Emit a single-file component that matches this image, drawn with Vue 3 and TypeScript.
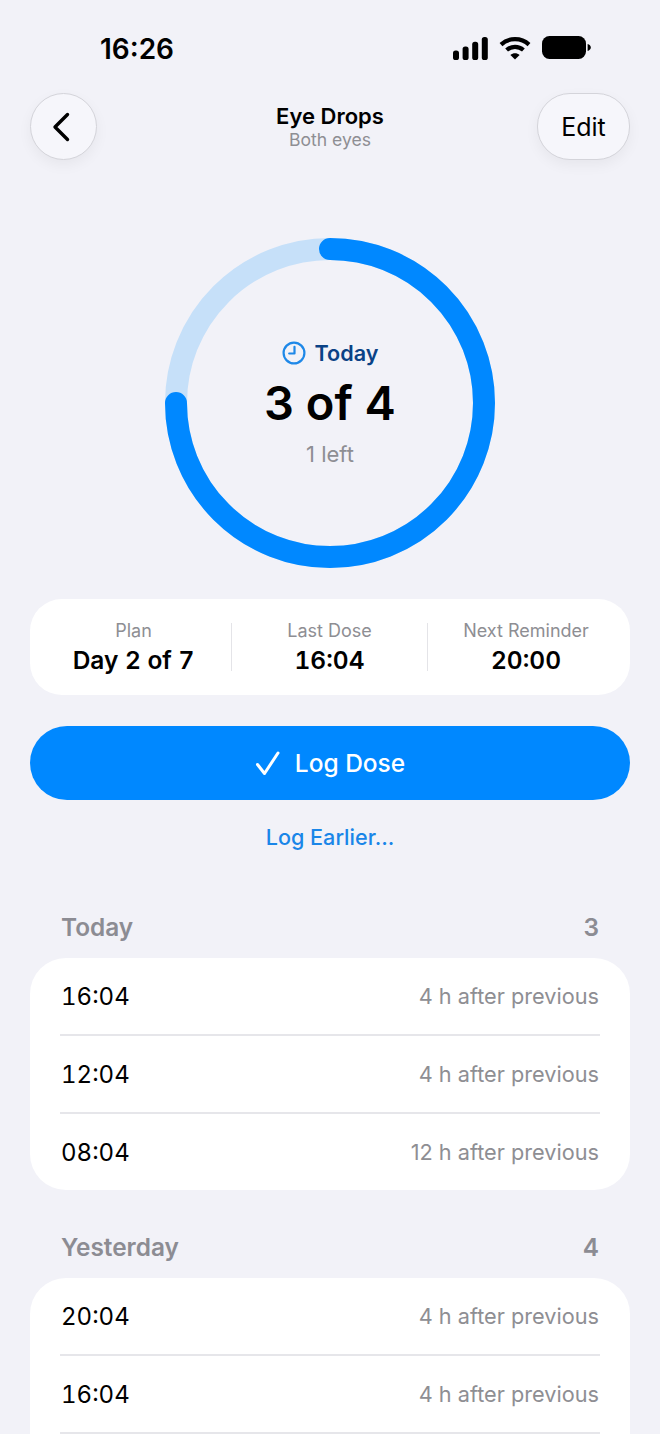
<template>
  <div class="screen">
    <div class="status-bar">
      <span class="clock">16:26</span>
      <div class="status-icons">
        <svg width="35" height="23" viewBox="0 0 35 23" fill="#000">
          <rect x="0" y="13.500" width="6" height="9.500" rx="2.600" />
          <rect x="9.600" y="9.500" width="6" height="13.500" rx="2.600" />
          <rect x="19.200" y="4.800" width="6" height="18.200" rx="2.600" />
          <rect x="28.800" y="0" width="6" height="23" rx="2.600" />
        </svg>
        <svg width="32" height="24" viewBox="0 0 32 24" fill="none" stroke="#000" stroke-width="4.200">
          <path d="M2 8.600C9.800 1.400 22.200 1.400 30 8.600" />
          <path d="M7.600 14C12.400 9.800 19.600 9.800 24.400 14" />
          <path d="M16 23.600L11.400 18.900C14 16.800 18 16.800 20.600 18.900Z" fill="#000" stroke="none" />
        </svg>
        <svg width="49" height="24" viewBox="0 0 49 24" fill="#000">
          <rect x="0" y="0" width="44" height="23" rx="7.500" />
          <path d="M45.600 8v7c1.900-.6 3.200-1.900 3.200-3.500S47.500 8.600 45.600 8Z" />
        </svg>
      </div>
    </div>

    <header class="nav">
      <button class="glass back" aria-label="Back">
        <svg width="20" height="30" viewBox="0 0 20 30" fill="none" stroke="#000" stroke-width="3.400" stroke-linecap="round" stroke-linejoin="round">
          <path d="M15.500 2.500L3 15L15.500 27.500" />
        </svg>
      </button>
      <div class="nav-title">
        <div class="title">Eye Drops</div>
        <div class="subtitle">Both eyes</div>
      </div>
      <div class="nav-right">
        <button class="glass edit">Edit</button>
      </div>
    </header>

    <section class="ring-wrap">
      <svg class="ring" width="330" height="330" viewBox="0 0 330 330" fill="none">
        <circle cx="165" cy="165" r="154" stroke="#c6e0f9" stroke-width="22" />
        <circle
          cx="165"
          cy="165"
          r="154"
          stroke="#0088ff"
          stroke-width="22"
          stroke-linecap="round"
          pathLength="100"
          :stroke-dasharray="`${progress} 100`"
          transform="rotate(-90 165 165)"
        />
      </svg>
      <div class="ring-center">
        <div class="ring-label">
          <svg width="24" height="24" viewBox="0 0 24 24" fill="none" stroke="#1e88e8" stroke-width="2.200" stroke-linecap="round" stroke-linejoin="round">
            <circle cx="12" cy="12" r="10.400" />
            <path d="M12.500 5.800V12.500H7.200" />
          </svg>
          <span>Today</span>
        </div>
        <div class="ring-count">3 of 4</div>
        <div class="ring-left">1 left</div>
      </div>
    </section>

    <section class="stats">
      <div v-for="s in stats" :key="s.label" class="stat">
        <div class="stat-label">{{ s.label }}</div>
        <div class="stat-value">{{ s.value }}</div>
      </div>
    </section>

    <button class="log-btn">
      <svg width="26" height="24" viewBox="0 0 26 24" fill="none" stroke="#fff" stroke-width="3" stroke-linecap="round" stroke-linejoin="round">
        <path d="M2.500 13.500L9.500 22.500L23 2" />
      </svg>
      <span>Log Dose</span>
    </button>
    <div class="log-earlier">Log Earlier...</div>

    <section v-for="g in groups" :key="g.name" class="group">
      <div class="group-head">
        <span>{{ g.name }}</span>
        <span>{{ g.count }}</span>
      </div>
      <div class="card" :class="{ more: g.count > g.rows.length }">
        <div v-for="(r, i) in g.rows" :key="i" class="row">
          <span class="row-time">{{ r.time }}</span>
          <span class="row-note">{{ r.note }}</span>
        </div>
      </div>
    </section>
  </div>
</template>

<script setup lang="ts">
interface Dose {
  time: string;
  note: string;
}

interface DoseGroup {
  name: string;
  count: number;
  rows: Dose[];
}

const progress = 75;

const stats = [
  { label: 'Plan', value: 'Day 2 of 7' },
  { label: 'Last Dose', value: '16:04' },
  { label: 'Next Reminder', value: '20:00' }
];

const groups: DoseGroup[] = [
  {
    name: 'Today',
    count: 3,
    rows: [
      { time: '16:04', note: '4 h after previous' },
      { time: '12:04', note: '4 h after previous' },
      { time: '08:04', note: '12 h after previous' }
    ]
  },
  {
    name: 'Yesterday',
    count: 4,
    rows: [
      { time: '20:04', note: '4 h after previous' },
      { time: '16:04', note: '4 h after previous' }
    ]
  }
];
</script>

<style>
html, body { margin: 0; background: #f2f2f8; }
</style>

<style scoped>
.screen {
  width: 660px;
  height: 1434px;
  overflow: hidden;
  background: #f2f2f8;
  font-family: Inter, "Liberation Sans", sans-serif;
  color: #000;
}

.status-bar {
  height: 93px;
  box-sizing: border-box;
  padding: 34px 69px 0 100px;
  display: flex;
  justify-content: space-between;
  align-items: flex-start;
}
.clock { font-size: 28px; line-height: 30px; font-weight: 600; }
.status-icons { display: flex; align-items: center; gap: 11px; margin-top: 2px; }

.nav {
  margin: 0 30px;
  height: 67px;
  display: grid;
  grid-template-columns: 1fr auto 1fr;
  align-items: center;
}
.nav-right { display: flex; justify-content: flex-end; }
.glass {
  height: 67px;
  border: 1px solid #d4d4da;
  background: #f6f6fb;
  box-shadow: 0 5px 14px rgba(0, 0, 0, 0.05);
  font-family: inherit;
  color: #000;
  padding: 0;
  display: flex;
  align-items: center;
  justify-content: center;
}
.back { width: 67px; border-radius: 50%; padding-right: 3px; }
.edit { width: 93px; border-radius: 33px; font-size: 25px; }
.nav-title { text-align: center; }
.title { font-size: 22px; line-height: 26px; font-weight: 600; }
.subtitle { font-size: 17.600px; line-height: 22px; color: #8e8e93; }

.ring-wrap {
  margin: 78px auto 0;
  width: 330px;
  height: 330px;
  display: grid;
}
.ring, .ring-center { grid-area: 1 / 1; }
.ring-center {
  display: flex;
  flex-direction: column;
  align-items: center;
  justify-content: center;
}
.ring-label {
  display: flex;
  align-items: center;
  gap: 9px;
  font-size: 21.600px;
  line-height: 26px;
  font-weight: 600;
  color: #0a4286;
}
.ring-count { font-size: 47px; line-height: 58px; font-weight: 600; margin-top: 8px; }
.ring-left { font-size: 22px; line-height: 26px; color: #8e8e93; margin-top: 9px; }

.stats {
  margin: 31px 30px 0;
  height: 96px;
  background: #fff;
  border-radius: 32px;
  display: grid;
  grid-template-columns: 201px 196px 203px;
  align-items: center;
}
.stat { text-align: center; height: 48px; }
.stat:first-child { padding-left: 6px; }
.stat:last-child { padding-right: 6px; }
.stat + .stat { border-left: 1px solid #e4e4e8; }
.stat-label { font-size: 18px; line-height: 16px; color: #8e8e93; }
.stat-value { font-size: 24.500px; line-height: 34px; font-weight: 600; margin-top: 4px; font-variant-numeric: tabular-nums; }

.log-btn {
  margin: 31px 30px 0;
  width: 600px;
  height: 74px;
  border: 0;
  border-radius: 37px;
  background: #0088ff;
  color: #fff;
  font-family: inherit;
  font-size: 24.500px;
  font-weight: 500;
  display: flex;
  align-items: center;
  justify-content: center;
  gap: 14px;
}
.log-earlier {
  margin-top: 24px;
  text-align: center;
  font-size: 21.600px;
  line-height: 26px;
  font-weight: 500;
  color: #1a86e8;
}

.group { margin: 0 30px 42px; }
.log-earlier + .group { margin-top: 62px; }
.group-head {
  padding: 0 31px;
  display: flex;
  justify-content: space-between;
  font-size: 24.400px;
  line-height: 30px;
  font-weight: 600;
  color: #8c8c93;
  margin-bottom: 16px;
}
.card {
  background: #fff;
  border-radius: 36px;
  padding: 0 30px;
}
.card.more { padding-bottom: 40px; }
.card.more .row:last-child { border-bottom: 2px solid #e6e6ea; }
.row {
  height: 76px;
  display: flex;
  justify-content: space-between;
  align-items: center;
}
.row + .row { border-top: 2px solid #e6e6ea; }
.row-time { font-size: 24px; font-variant-numeric: tabular-nums; padding-left: 1px; }
.row-note { font-size: 21.700px; color: #8e8e93; padding-right: 1px; }
</style>
